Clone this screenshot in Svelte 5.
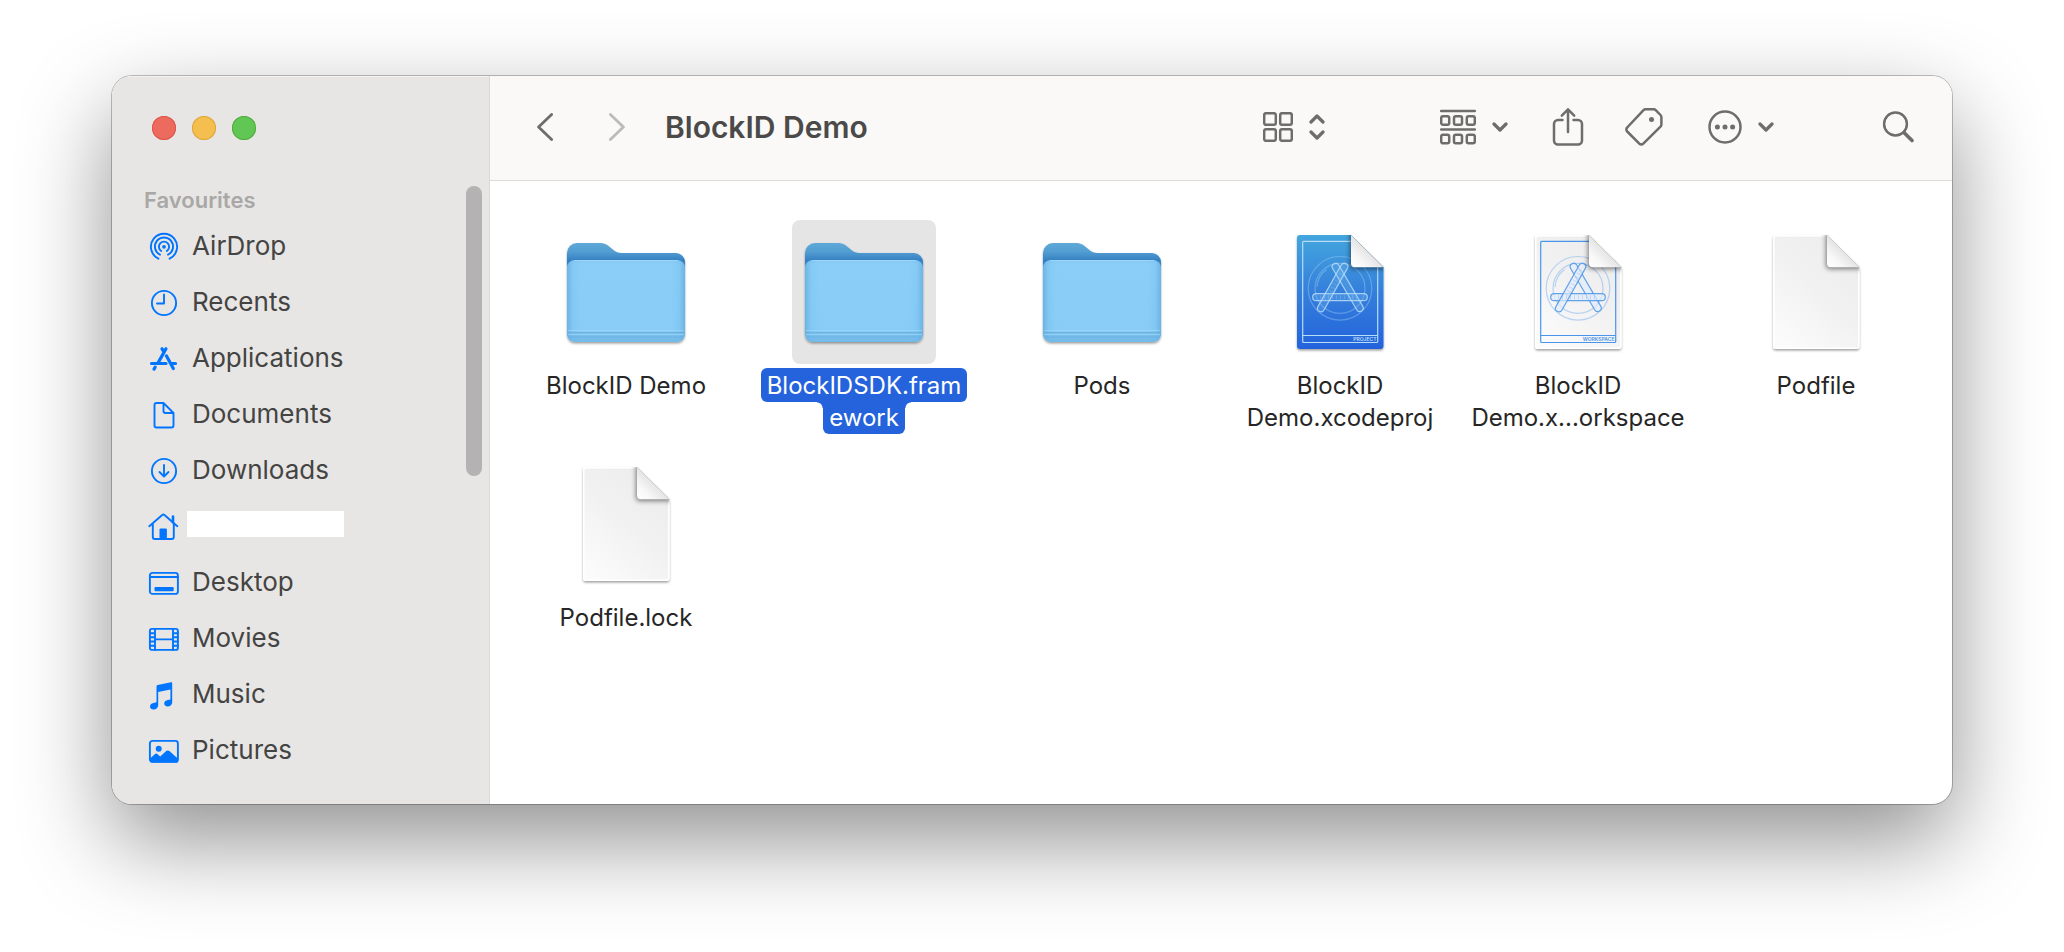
<script>
  const places = [
    { name: 'AirDrop', icon: 'airdrop' },
    { name: 'Recents', icon: 'clock' },
    { name: 'Applications', icon: 'apps' },
    { name: 'Documents', icon: 'doc' },
    { name: 'Downloads', icon: 'download' },
    { name: '', icon: 'home' },
    { name: 'Desktop', icon: 'desktop' },
    { name: 'Movies', icon: 'film' },
    { name: 'Music', icon: 'music' },
    { name: 'Pictures', icon: 'picture' }
  ];

  const files = [
    { kind: 'folder', lines: ['BlockID Demo'] },
    { kind: 'folder', lines: ['BlockIDSDK.fram', 'ework'] },
    { kind: 'folder', lines: ['Pods'] },
    { kind: 'project', lines: ['BlockID', 'Demo.xcodeproj'] },
    { kind: 'workspace', lines: ['BlockID', 'Demo.x...orkspace'] },
    { kind: 'file', lines: ['Podfile'] },
    { kind: 'file', lines: ['Podfile.lock'] }
  ];

  let selected = $state(1);
</script>

<svg class="defs" width="0" height="0" aria-hidden="true">
  <defs>
    <linearGradient id="folderBack" x1="0" y1="0" x2="0" y2="1">
      <stop offset="0" stop-color="#5fa8d8" />
      <stop offset="0.1" stop-color="#529dd2" />
      <stop offset="0.2" stop-color="#347fc2" />
      <stop offset="1" stop-color="#347fc2" />
    </linearGradient>
    <linearGradient id="folderFront" x1="0" y1="0" x2="0" y2="1">
      <stop offset="0" stop-color="#84c9f5" />
      <stop offset="0.05" stop-color="#8bcff8" />
      <stop offset="0.84" stop-color="#89cdf7" />
      <stop offset="1" stop-color="#79c0ed" />
    </linearGradient>
    <linearGradient id="folderSides" x1="0" y1="0" x2="1" y2="0">
      <stop offset="0" stop-color="#4a9ad4" stop-opacity="0.5" />
      <stop offset="0.05" stop-color="#4a9ad4" stop-opacity="0.1" />
      <stop offset="0.12" stop-color="#4a9ad4" stop-opacity="0" />
      <stop offset="0.88" stop-color="#4a9ad4" stop-opacity="0" />
      <stop offset="0.95" stop-color="#4a9ad4" stop-opacity="0.1" />
      <stop offset="1" stop-color="#4a9ad4" stop-opacity="0.5" />
    </linearGradient>
    <linearGradient id="paper" x1="0.9" y1="0" x2="0.2" y2="1">
      <stop offset="0" stop-color="#ececec" />
      <stop offset="0.5" stop-color="#f1f1f1" />
      <stop offset="1" stop-color="#fbfbfb" />
    </linearGradient>
    <linearGradient id="blueprint" x1="0" y1="0" x2="0" y2="1">
      <stop offset="0" stop-color="#44a6de" />
      <stop offset="0.5" stop-color="#347fdb" />
      <stop offset="1" stop-color="#2463dc" />
    </linearGradient>
    <linearGradient id="curl" x1="0" y1="1" x2="0.5" y2="0.5">
      <stop offset="0" stop-color="#ffffff" />
      <stop offset="0.5" stop-color="#f7f7f7" />
      <stop offset="1" stop-color="#e4e4e4" />
    </linearGradient>
    <filter id="drop" x="-20%" y="-20%" width="140%" height="140%">
      <feDropShadow dx="0" dy="1.5" stdDeviation="1.2" flood-color="#000" flood-opacity="0.38" />
    </filter>
    <filter id="soft" x="-50%" y="-50%" width="200%" height="200%">
      <feGaussianBlur stdDeviation="2.8" />
    </filter>
    <clipPath id="page">
      <path d="M32 15H83L115.500 47V126a3 3 0 0 1-3 3H32a3 3 0 0 1-3-3V18a3 3 0 0 1 3-3z" />
    </clipPath>
  </defs>
</svg>

{#snippet chevronDown()}
  <svg class="line bold" width="16" height="12" viewBox="0 0 16 12"><path d="M2 3l6 6 6-6" /></svg>
{/snippet}

{#snippet placeIcon(icon)}
  <svg class="place-icon" width="32" height="32" viewBox="0 0 32 32" aria-hidden="true">
    {#if icon === 'airdrop'}
      <path d="M10.400 27.700a13.100 13.100 0 1 1 11.200 0" />
      <path d="M12 23.700a9.100 9.100 0 1 1 8 0" />
      <path d="M13.200 20a5.100 5.100 0 1 1 5.600 0" />
      <circle class="solid" cx="16" cy="15.800" r="1.900" />
    {:else if icon === 'clock'}
      <circle cx="16" cy="16" r="12.100" />
      <path d="M16 7.500v9H9" />
    {:else if icon === 'apps'}
      <g class="thick">
        <path d="M18 5.800L10.200 19.600M14 5.800l1.600 2.600M18.400 12.800l6.900 12.700M7.200 24.100l-1.200 2M3.500 20.500H18M23.300 20.500h4.200" />
      </g>
    {:else if icon === 'doc'}
      <path d="M8.500 4H15.500L25.500 14V26.500a2 2 0 0 1-2 2h-15a2 2 0 0 1-2-2V6a2 2 0 0 1 2-2zM15.500 4v8a2 2 0 0 0 2 2h8" />
    {:else if icon === 'download'}
      <circle cx="16" cy="16" r="12.100" />
      <path d="M16 10v11M11.500 17l4.500 4.500 4.500-4.500" />
    {:else if icon === 'home'}
      <path d="M1.300 15.200L14.200 4a1.700 1.700 0 0 1 2.300 0l12.800 11.200M4.800 12.500V26a2 2 0 0 0 2 2h17a2 2 0 0 0 2-2V12.500" />
      <path d="M25 5.500v6" stroke-width="2.600" />
      <path class="solid" d="M11.500 18.500a1 1 0 0 1 1-1h5.400a1 1 0 0 1 1 1V28h-7.400z" />
    {:else if icon === 'desktop'}
      <rect x="1.900" y="5.900" width="28" height="21" rx="2.500" />
      <path d="M2 10h28" />
      <rect class="solid" x="6.500" y="20" width="19.200" height="4.200" rx="1" />
    {:else if icon === 'film'}
      <rect x="1.900" y="5.900" width="28" height="21" rx="2" />
      <path d="M7 6v21M25 6v21M7 16.400h18M2 10.200h5M2 14.300h5M2 18.500h5M2 22.700h5M25 10.200h5M25 14.300h5M25 18.500h5M25 22.700h5" />
    {:else if icon === 'music'}
      <path class="solid" d="M8.500 7.600a1.500 1.500 0 0 1 1.200-1.500L23 3.200a1 1 0 0 1 1.200 1V23.500c0 2.300-1.900 4-4.600 4-2 0-3.400-1.200-3.400-2.900 0-2 1.700-3.200 3.600-3.500l1.700-.3c.6-.1.900-.5.900-1V10.500L10.200 13V26.200c0 2.500-2 4.200-4.600 4.200-2.200 0-3.600-1.200-3.600-3 0-2 1.500-3.200 3.500-3.500l2-.4c.7-.1 1-.5 1-1z" />
    {:else}
      <rect x="1.900" y="5.900" width="28" height="21" rx="2.500" />
      <circle class="solid" cx="10.700" cy="13.700" r="3" />
      <path class="solid" d="M2 23.500l4.800-4.300a2.200 2.200 0 0 1 2.800 0l2.600 2.200 6-5.300a2.400 2.400 0 0 1 3.200 0l8.600 7.600V26a1.500 1.500 0 0 1-1.500 1.500h-25A1.500 1.500 0 0 1 2 26z" />
    {/if}
  </svg>
{/snippet}

{#snippet fileIcon(kind)}
  <svg width="144" height="144" viewBox="0 0 144 144" aria-hidden="true">
    {#if kind === 'folder'}
      <g filter="url(#drop)">
        <path fill="url(#folderBack)" d="M13 112V33a10 10 0 0 1 10-10h23c4 0 6.500 1.200 9.500 3.700l3.600 3C62 32 64 33 68 33h54a9 9 0 0 1 9 9v70z" />
        <rect x="13" y="40" width="118" height="82" rx="8" fill="url(#folderFront)" />
      </g>
      <rect x="13" y="40" width="118" height="82" rx="8" fill="url(#folderSides)" />
      <path d="M13.500 112h117v2a8 8 0 0 1-8 8h-101a8 8 0 0 1-8-8z" fill="#6fb6e5" opacity="0.45" />
      <path d="M14 110.500h116M14 114.500h116" stroke="#a3dafa" stroke-opacity="0.6" />
      <path d="M14 112.500h116M15 117h114" stroke="#62aadb" stroke-opacity="0.5" />
      <path d="M20 40.500h104" stroke="#a6dcfb" stroke-opacity="0.7" />
    {:else}
      <g filter="url(#drop)">
        <path
          fill={kind === 'project' ? 'url(#blueprint)' : 'url(#paper)'}
          d="M32 15H83L115.500 47V126a3 3 0 0 1-3 3H32a3 3 0 0 1-3-3V18a3 3 0 0 1 3-3z"
        />
      </g>
      {#if kind !== 'project'}
        <path d="M83 15.700H32.500a2.800 2.800 0 0 0-2.800 2.800V125.500a2.800 2.800 0 0 0 2.800 2.800h79.500a2.800 2.800 0 0 0 2.800-2.800V47" fill="none" stroke="#fff" stroke-width="1.600" />
      {/if}
      <g clip-path="url(#page)">
        {#if kind === 'project' || kind === 'workspace'}
          <g class={['plan', kind]}>
            <rect x="34.700" y="21.300" width="75" height="101.200" rx="1" />
            <path d="M34.700 115.500h75" />
            <circle class="faint" cx="72" cy="68.300" r="31.800" />
            <circle class="faint" cx="72" cy="68.300" r="25" />
            <path class="faint" d="M49 67a23 23 0 0 1 9.500-17.500" />
            <rect class="stick" x="-3.500" y="-3.500" width="7" height="54.700" rx="3.500" transform="translate(67.700 46.700) rotate(-30.200)" />
            <rect class="stick" x="44.700" y="73.700" width="54.600" height="7" rx="3.500" />
            <rect class="stick" x="-3.500" y="-3.500" width="7" height="54.700" rx="3.500" transform="translate(76.300 46.700) rotate(29.300)" />
            <path class="ticks" d="M52 77.200h40M75 50L61 75" />
            <text x="108.500" y="121.400" text-anchor="end">{kind.toUpperCase()}</text>
          </g>
        {/if}
        <path d="M82 8V45a4 4 0 0 0 4 4h34z" fill="#000" opacity="0.5" filter="url(#soft)" />
      </g>
      <path d="M83 15V43.500a3.700 3.700 0 0 0 3.700 3.700H115.500z" fill="url(#curl)" />
    {/if}
  </svg>
{/snippet}

<div class="window">
  <aside>
    <div class="lights">
      <button class="close" aria-label="Close"></button>
      <button class="minimise" aria-label="Minimise"></button>
      <button class="zoom" aria-label="Zoom"></button>
    </div>
    <h2>Favourites</h2>
    <nav aria-label="Favourites">
      {#each places as place}
        <a href="#{place.icon}" aria-label={place.name || 'Home'}>
          {@render placeIcon(place.icon)}
          {#if place.name}
            <span>{place.name}</span>
          {:else}
            <span class="blank"></span>
          {/if}
        </a>
      {/each}
    </nav>
    <div class="scrollbar"></div>
  </aside>

  <main>
    <header>
      <button aria-label="Back">
        <svg class="line nav" width="16" height="28" viewBox="0 0 16 28"><path d="M14.600 1.500L1.600 14l13 12.500" /></svg>
      </button>
      <button class="forward" aria-label="Forward" disabled>
        <svg class="line nav" width="16" height="28" viewBox="0 0 16 28"><path d="M1.400 1.500L14.400 14l-13 12.500" /></svg>
      </button>
      <h1>BlockID Demo</h1>
      <button class="view" aria-label="View as icons">
        <svg class="line" width="30" height="30" viewBox="0 0 30 30">
          <rect x="1.200" y="1.200" width="11.600" height="11.600" rx="1.800" /><rect x="17.200" y="1.200" width="11.600" height="11.600" rx="1.800" />
          <rect x="1.200" y="17.200" width="11.600" height="11.600" rx="1.800" /><rect x="17.200" y="17.200" width="11.600" height="11.600" rx="1.800" />
        </svg>
        <svg class="line bold" width="16" height="28" viewBox="0 0 16 28"><path d="M2 9l6-6 6 6M2 19l6 6 6-6" /></svg>
      </button>
      <button class="group" aria-label="Group items">
        <svg class="line" width="36" height="36" viewBox="0 0 36 36">
          <path d="M1.200 2h33.600M1.200 20.500h33.600" />
          {#each [1.2, 14, 26.8] as x}
            <rect {x} y="7.200" width="8" height="8.500" rx="1.800" /><rect {x} y="25.800" width="8" height="8.500" rx="1.800" />
          {/each}
        </svg>
        {@render chevronDown()}
      </button>
      <button class="share" aria-label="Share">
        <svg class="line" width="32" height="40" viewBox="0 0 32 40">
          <path d="M10.500 13H6a4 4 0 0 0-4 4V33.500a4 4 0 0 0 4 4H26a4 4 0 0 0 4-4V17a4 4 0 0 0-4-4H21.500M16 25V2.500M9.800 8.600L16 2.400l6.200 6.200" />
        </svg>
      </button>
      <button class="tag" aria-label="Edit tags">
        <svg class="line" width="40" height="40" viewBox="0 0 40 40">
          <path d="M21.700 2.200H29.500a3 3 0 0 1 2.200.9l4.800 4.900a3 3 0 0 1 .9 2.200V17.500a3 3 0 0 1-.9 2.100L19.300 36.700a2.800 2.800 0 0 1-4 0L3.200 24.500a2.800 2.800 0 0 1 0-4L19.500 3.100a3 3 0 0 1 2.200-.9z" />
          <circle class="dot" cx="27.500" cy="12.500" r="2.500" />
        </svg>
      </button>
      <button class="more" aria-label="More actions">
        <svg class="line" width="34" height="34" viewBox="0 0 34 34">
          <circle cx="17" cy="17" r="15.500" />
          <circle class="dot" cx="9.400" cy="17" r="2.500" /><circle class="dot" cx="17" cy="17" r="2.500" /><circle class="dot" cx="24.600" cy="17" r="2.500" />
        </svg>
        {@render chevronDown()}
      </button>
      <button class="search" aria-label="Search">
        <svg class="line" width="32" height="32" viewBox="0 0 32 32">
          <circle cx="13.500" cy="13" r="11.400" /><path d="M22.200 21.700l7.800 7.800" stroke-width="3.600" />
        </svg>
      </button>
    </header>

    <div class="files">
      {#each files as file, i}
        <button class={['file', { selected: selected === i }]} onclick={() => (selected = i)}>
          <span class="thumb">{@render fileIcon(file.kind)}</span>
          {#each file.lines as line}
            <span class="label">{line}</span>
          {/each}
        </button>
      {/each}
    </div>
  </main>
</div>

<style>
  :global(body) {
    background: #fff;
    font-family: Inter, 'Liberation Sans', sans-serif;
  }
  .defs {
    position: absolute;
  }
  button {
    border: 0;
    margin: 0;
    padding: 0;
    background: none;
    color: inherit;
    font: inherit;
  }
  svg {
    display: block;
    flex: none;
  }

  .window {
    display: flex;
    margin: 76px 112px 148px;
    border-radius: 20px;
    overflow: hidden;
    background: #fff;
    box-shadow:
      0 0 0 1px rgba(0, 0, 0, 0.24),
      0 36px 92px rgba(0, 0, 0, 0.44);
  }

  aside {
    position: relative;
    flex: none;
    box-sizing: border-box;
    width: 378px;
    padding-bottom: 25px;
    border-right: 1px solid #dad9d8;
    background: #e7e6e4;
    box-shadow: inset 0 1px #f4f3f2;
  }
  .lights {
    display: flex;
    align-items: center;
    gap: 16px;
    height: 104px;
    padding-left: 40px;
  }
  .lights button {
    width: 24px;
    height: 24px;
    border-radius: 50%;
  }
  .close {
    background: #ed6a5f;
    box-shadow: inset 0 0 0 1px #de5449;
  }
  .minimise {
    background: #f5bf4f;
    box-shadow: inset 0 0 0 1px #dba63b;
  }
  .zoom {
    background: #62c655;
    box-shadow: inset 0 0 0 1px #4fab41;
  }
  h2 {
    margin: 0;
    padding: 2px 0 0 32px;
    font-size: 22px;
    font-weight: 600;
    line-height: 37px;
    color: #a9a8a7;
  }
  nav {
    display: flex;
    flex-direction: column;
  }
  nav a {
    display: flex;
    align-items: center;
    gap: 12px;
    height: 56px;
    padding-left: 36px;
    font-size: 26px;
    line-height: 30px;
    color: #444443;
    text-decoration: none;
  }
  nav span {
    margin-bottom: 2px;
  }
  nav .blank {
    width: 157px;
    height: 26px;
    margin: 0 0 6px -5px;
    background: #fff;
  }
  .place-icon {
    fill: none;
    stroke: #0275ff;
    stroke-width: 1.9;
    stroke-linecap: round;
    stroke-linejoin: round;
  }
  .place-icon .solid {
    fill: #0275ff;
    stroke: none;
  }
  .thick {
    stroke-width: 3.2;
  }
  .scrollbar {
    position: absolute;
    top: 110px;
    right: 7px;
    width: 16px;
    height: 290px;
    border-radius: 8px;
    background: #b4b2b2;
  }

  main {
    flex: 1;
    min-width: 0;
  }
  header {
    display: flex;
    align-items: center;
    height: 102px;
    padding: 0 38px 2px 47px;
    border-bottom: 1px solid #dcdbda;
    background: #faf9f7;
    color: #6e6d6c;
  }
  header button {
    display: flex;
    align-items: center;
    gap: 16px;
  }
  .line {
    fill: none;
    stroke: currentColor;
    stroke-width: 2.5;
    stroke-linecap: round;
    stroke-linejoin: round;
  }
  .line.nav {
    stroke-width: 2.8;
  }
  .line.bold {
    stroke-width: 3.2;
  }
  .dot {
    fill: currentColor;
    stroke: none;
  }
  .forward {
    margin-left: 56px;
    color: #bcbbba;
  }
  h1 {
    flex: 1;
    margin: 0 0 0 40px;
    font-size: 30px;
    font-weight: 600;
    white-space: nowrap;
    color: #4b4a49;
  }
  .group {
    margin-left: 115px;
  }
  .share {
    margin-left: 44px;
  }
  .tag {
    margin-left: 40px;
  }
  .more {
    margin-left: 44px;
  }
  .search {
    margin-left: 108px;
  }

  .files {
    display: grid;
    grid-template-columns: repeat(auto-fill, minmax(238px, 1fr));
    gap: 18px 0;
    padding: 39px 17px 20px;
  }
  .file {
    display: flex;
    flex-direction: column;
    align-items: center;
    height: 214px;
    color: #262626;
    font-size: 24px;
    white-space: nowrap;
  }
  .thumb {
    margin-bottom: 4px;
    border-radius: 8px;
  }
  .label {
    position: relative;
    padding: 0 6px;
    border-radius: 6px;
    line-height: 32px;
  }
  .thumb + .label {
    padding-top: 2px;
  }
  .selected .thumb {
    background: #e5e5e5;
  }
  .selected .label {
    background: #2563dc;
    color: #fff;
  }
  .selected .label + .label {
    border-radius: 0 0 6px 6px;
  }
  .selected .label + .label::before,
  .selected .label + .label::after {
    content: '';
    position: absolute;
    top: 0;
    width: 6px;
    height: 6px;
  }
  .selected .label + .label::before {
    right: 100%;
    background: radial-gradient(circle at 0 100%, transparent 5px, #2563dc 6px);
  }
  .selected .label + .label::after {
    left: 100%;
    background: radial-gradient(circle at 100% 100%, transparent 5px, #2563dc 6px);
  }

  .plan {
    fill: none;
    stroke-width: 1.2;
  }
  .plan.project {
    stroke: #b8ddf8;
    --stick: rgba(120, 185, 240, 0.28);
    --ink: #b8ddf8;
  }
  .plan.workspace {
    stroke: #4a94ea;
    --stick: rgba(226, 236, 250, 0.7);
    --ink: #4a94ea;
  }
  .plan .faint {
    stroke-opacity: 0.35;
  }
  .plan .ticks {
    stroke-width: 4;
    stroke-dasharray: 1 3;
    stroke-opacity: 0.25;
  }
  .plan .stick {
    fill: var(--stick);
    stroke-opacity: 0.85;
  }
  .plan text {
    fill: var(--ink);
    stroke: none;
    font-size: 5px;
    font-weight: 600;
  }
</style>
